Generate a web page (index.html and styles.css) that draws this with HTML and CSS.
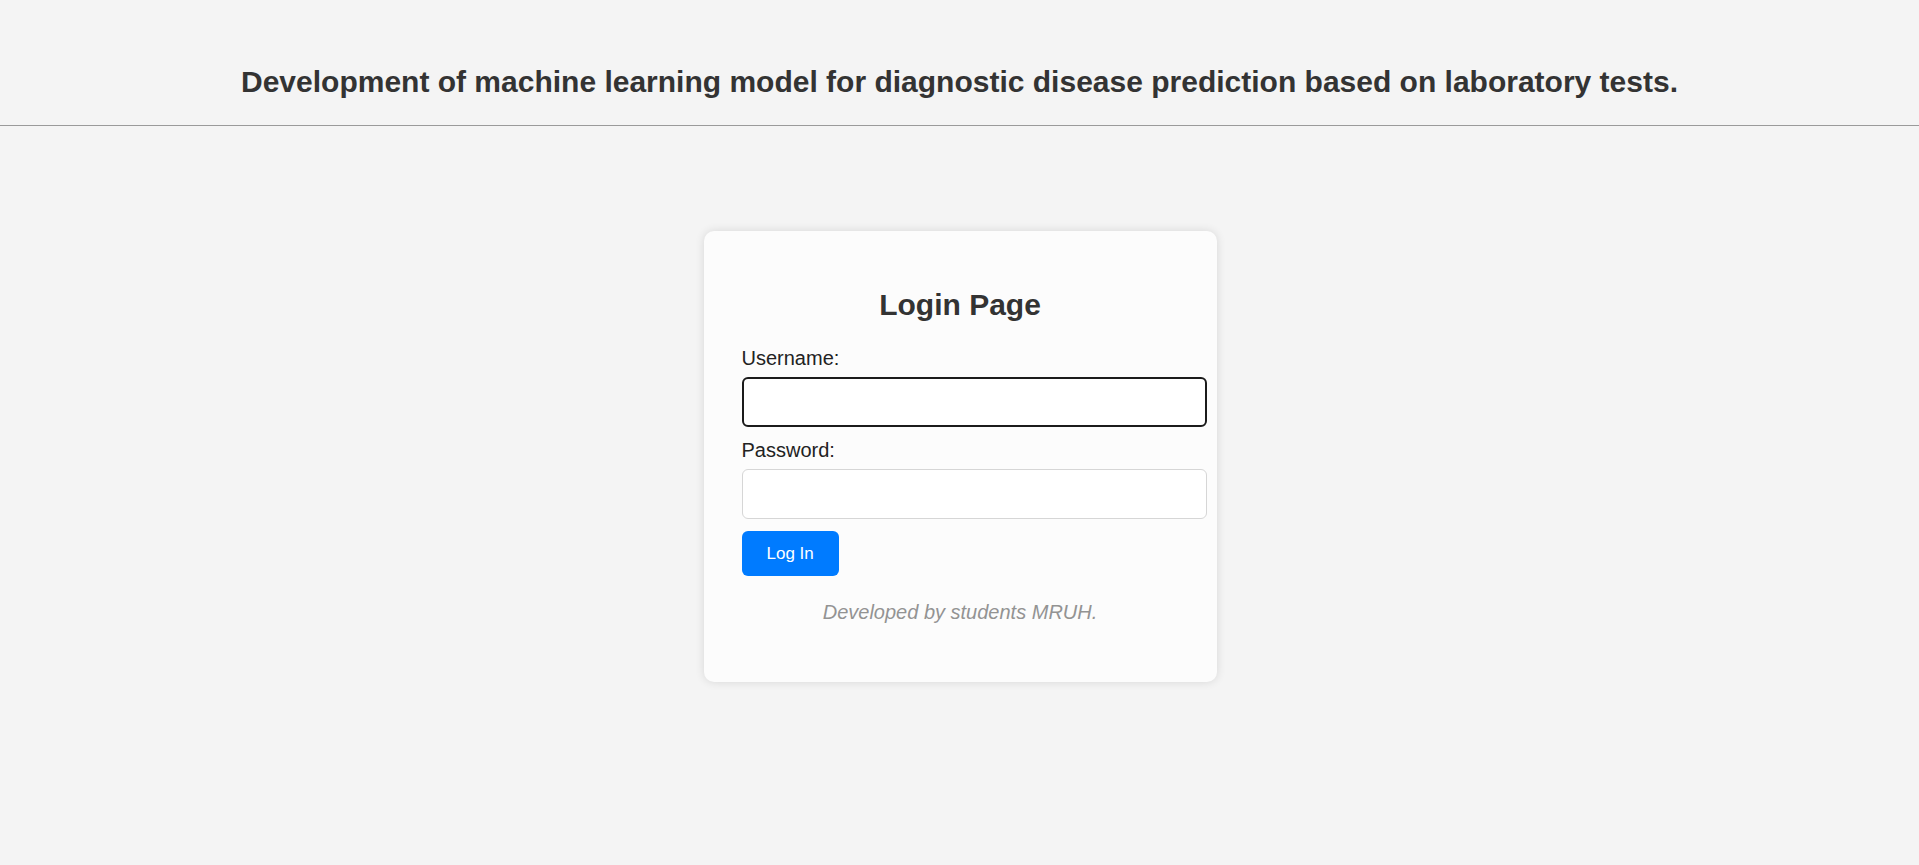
FILE: index.html
```html
<!DOCTYPE html>
<html lang="en">
<head>
<meta charset="utf-8">
<title>Login Page</title>
<link rel="stylesheet" href="styles.css">
</head>
<body>
  <header class="site-header">
    <h1 class="site-title">Development of machine learning model for diagnostic disease prediction based on laboratory tests.</h1>
  </header>
  <main class="page">
    <section class="login-card">
      <h2 class="login-title">Login Page</h2>
      <form class="login-form" onsubmit="return false;">
        <label class="field-label" for="username">Username:</label>
        <input class="field-input is-focused" id="username" type="text">
        <label class="field-label" for="password">Password:</label>
        <input class="field-input" id="password" type="password">
        <button class="login-btn" type="submit">Log In</button>
      </form>
      <p class="credits">Developed by students MRUH.</p>
    </section>
  </main>
</body>
</html>
```
FILE: styles.css
```css
html, body {
  margin: 0;
  padding: 0;
}
body {
  background: #f4f4f4;
  font-family: "Liberation Sans", Arial, sans-serif;
  color: #333;
  min-height: 865px;
}
.site-header {
  padding: 64px 0 26px;
  border-bottom: 1px solid #9a9a9a;
  text-align: center;
}
.site-title {
  margin: 0;
  font-size: 30px;
  line-height: 35px;
  font-weight: bold;
  color: #333;
}
.page {
  display: flex;
  justify-content: center;
  padding-top: 105px;
  padding-left: 1px;
}
.login-card {
  width: 437px;
  padding: 38px;
  background: #fcfcfc;
  border-radius: 10px;
  box-shadow: 0 0 10px rgba(0, 0, 0, 0.12);
  text-align: center;
}
.login-title {
  margin: 18px 0 25px;
  font-size: 30px;
  line-height: 35px;
  font-weight: bold;
  color: #333;
}
.login-form {
  display: flex;
  flex-direction: column;
  align-items: flex-start;
  text-align: left;
}
.field-label {
  font-size: 20px;
  line-height: 23px;
  color: #222;
  margin-bottom: 7px;
}
.field-input {
  width: 100%;
  height: 24px;
  padding: 12px 13px;
  margin: 0 0 12px;
  font-size: 20px;
  font-family: inherit;
  border: 1px solid #d6d6d6;
  border-radius: 6px;
  background: #fff;
  outline: none;
}
.field-input.is-focused {
  border: 2px solid #1b1b1b;
  padding: 11px 12px;
}
.login-btn {
  margin-top: 0;
  padding: 12px 25px;
  font-size: 17px;
  line-height: 21px;
  font-family: inherit;
  color: #fff;
  background: #007bff;
  border: none;
  border-radius: 6px;
  cursor: pointer;
}
.credits {
  margin: 25px 0 20px;
  font-size: 20px;
  line-height: 23px;
  font-style: italic;
  color: #939393;
}
```
